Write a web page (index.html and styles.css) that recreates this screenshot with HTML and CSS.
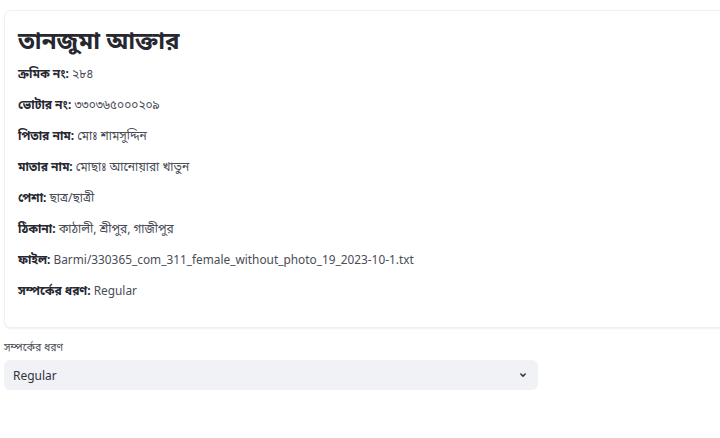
FILE: index.html
```html
<!DOCTYPE html>
<html lang="bn">
<head>
<meta charset="utf-8">
<link rel="stylesheet" href="styles.css">
</head>
<body>
<main class="page">
  <section class="card">
    <h1 class="name">তানজুমা আক্তার</h1>
    <p class="row"><b>ক্রমিক নং:</b> ২৮৪</p>
    <p class="row"><b>ভোটার নং:</b> ৩৩০৩৬৫০০০২০৯</p>
    <p class="row"><b>পিতার নাম:</b> মোঃ শামসুদ্দিন</p>
    <p class="row"><b>মাতার নাম:</b> মোছাঃ আনোয়ারা খাতুন</p>
    <p class="row"><b>পেশা:</b> ছাত্র/ছাত্রী</p>
    <p class="row"><b>ঠিকানা:</b> কাঠালী, শ্রীপুর, গাজীপুর</p>
    <p class="row"><b>ফাইল:</b> <span class="latin">Barmi/330365_com_311_female_without_photo_19_2023-10-1.txt</span></p>
    <p class="row"><b>সম্পর্কের ধরণ:</b> <span class="latin">Regular</span></p>
  </section>
  <div class="field">
    <label class="label">সম্পর্কের ধরণ</label>
    <div class="select">
      <span>Regular</span>
      <svg class="chev" width="10" height="10" viewBox="0 0 10 10"><path d="M2.8 4 L5 6.1 L7.2 4" fill="none" stroke="#31333f" stroke-width="1.5" stroke-linecap="round" stroke-linejoin="round"/></svg>
    </div>
  </div>
</main>
</body>
</html>
```

FILE: styles.css
```css
html, body {
  margin: 0;
  padding: 0;
  background: #ffffff;
  overflow: hidden;
}
body {
  font-family: "Noto Sans", "Noto Sans Bengali", sans-serif;
  color: #31333f;
}
.page {
  padding: 10px 0 0 4px;
}
.card {
  margin-right: -24px;
  border: 1px solid #f0f0f0;
  border-radius: 7px;
  box-shadow: 0 1px 2px rgba(0,0,0,0.06);
  padding: 12px 13px 14px 13px;
  background: #fff;
}
.name {
  margin: 0 0 8px 0;
  font-size: 24px;
  line-height: 34px;
  font-weight: 700;
  color: #262730;
}
.row {
  margin: 0 0 14px 0;
  font-size: 12px;
  line-height: 17px;
  color: #4a4c56;
}
.row b {
  font-weight: 700;
  color: #262730;
}
.latin {
  font-size: 11.85px;
}
.field {
  margin-top: 12px;
  width: 534px;
}
.label {
  display: block;
  font-size: 10.5px;
  line-height: 14px;
  color: #4a4c56;
  margin-bottom: 6px;
}
.select {
  display: flex;
  align-items: center;
  justify-content: space-between;
  height: 30px;
  padding: 0 10px 0 9px;
  background: #f0f2f6;
  border-radius: 6px;
  font-size: 12px;
  color: #31333f;
}
.chev {
  display: block;
}
```
